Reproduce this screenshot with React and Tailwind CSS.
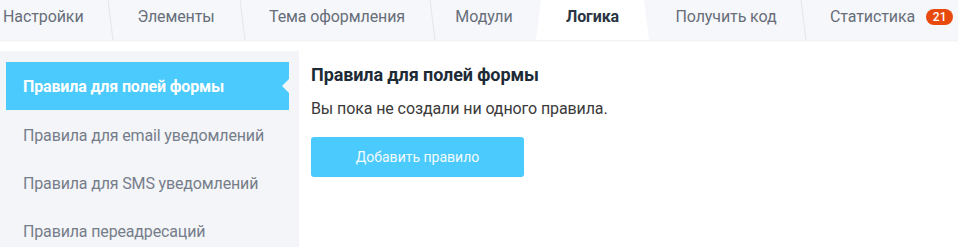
import { useState } from 'react';

const tabs = [
  { label: 'Настройки', width: 'w-[110px]', first: true },
  { label: 'Элементы', width: 'w-[132px]' },
  { label: 'Тема оформления', width: 'w-[190px]' },
  { label: 'Модули', width: 'w-[104px]' },
  { label: 'Логика', width: 'w-[113px]', active: true },
  { label: 'Получить код', width: 'w-[154px]', noSep: true },
  { label: 'Статистика', width: 'w-[155px]', badge: 21, left: true },
];

const rules = [
  'Правила для полей формы',
  'Правила для email уведомлений',
  'Правила для SMS уведомлений',
  'Правила переадресаций',
];

function Tab({ tab }) {
  if (tab.active) {
    return (
      <div className={`relative ${tab.width} h-full shrink-0`}>
        <div className="absolute inset-0 bg-white [clip-path:polygon(5px_0,calc(100%-5px)_0,100%_100%,0_100%)]" />
        <div className="relative flex h-full items-center justify-center pb-[6px] text-[16px] font-bold tracking-[-0.1px] text-[#2a3545]">
          {tab.label}
        </div>
      </div>
    );
  }

  return (
    <div className={`relative ${tab.width} h-full shrink-0`}>
      {!tab.first && !tab.noSep && (
        <div className="absolute left-0 top-0 h-full w-px skew-x-[7deg] bg-[#e2e5eb]" />
      )}
      <div
        className={`flex h-full items-center pb-[6px] text-[16px] tracking-[-0.1px] text-[#676e79] ${
          tab.first ? 'justify-start pl-[3px]' : tab.left ? 'justify-start pl-[27px]' : 'justify-center'
        }`}
      >
        {tab.label}
        {tab.badge && (
          <span className="ml-[11px] flex h-[16px] w-[27px] items-center justify-center rounded-full bg-[#e84a0e] text-[12px] font-medium leading-none tracking-normal text-white">
            {tab.badge}
          </span>
        )}
      </div>
    </div>
  );
}

export default function App() {
  const [current, setCurrent] = useState(0);

  return (
    <div className="h-[247px] w-[958px] overflow-hidden bg-white font-['Roboto',sans-serif]">
      {/* Tabs */}
      <div className="flex h-[40px] bg-[#f6f7fb] shadow-[0_1px_2px_rgba(0,0,0,0.07)]">
        {tabs.map((tab) => (
          <Tab key={tab.label} tab={tab} />
        ))}
      </div>

      <div className="mt-[11px] flex">
        {/* Sidebar */}
        <div className="h-[200px] w-[299px] shrink-0 bg-[#f4f5f9] pt-[11px]">
          {rules.map((rule, idx) =>
            idx === current ? (
              <div
                key={rule}
                className="relative ml-[6px] mr-[10px] flex h-[48px] items-center bg-[#4bcafd] pl-[17px] pt-[2px] text-[16px] font-bold tracking-[-0.15px] text-white"
              >
                {rule}
                <div className="absolute right-0 top-1/2 h-0 w-0 -translate-y-1/2 border-y-[7px] border-r-[7px] border-y-transparent border-r-[#f4f5f9]" />
              </div>
            ) : (
              <div
                key={rule}
                onClick={() => setCurrent(idx)}
                className="ml-[6px] mr-[10px] flex h-[48px] cursor-pointer items-center pl-[17px] pt-[3px] text-[16px] tracking-[-0.15px] text-[#767d8a]"
              >
                {rule}
              </div>
            )
          )}
        </div>

        {/* Content */}
        <div className="pl-[12px] pt-[12px]">
          <h3 className="text-[18px] font-bold leading-[24px] tracking-[-0.1px] text-[#1d2b36]">{rules[current]}</h3>
          <p className="mt-[8px] pt-[2px] text-[16px] leading-[24px] tracking-[-0.1px] text-[#3a3a3a]">
            Вы пока не создали ни одного правила.
          </p>
          <button className="mt-[16px] flex h-[40px] w-[213px] items-center justify-center rounded-[3px] bg-[#4bcafd] text-[14px] text-[#f4fbff]">
            Добавить правило
          </button>
        </div>
      </div>
    </div>
  );
}
